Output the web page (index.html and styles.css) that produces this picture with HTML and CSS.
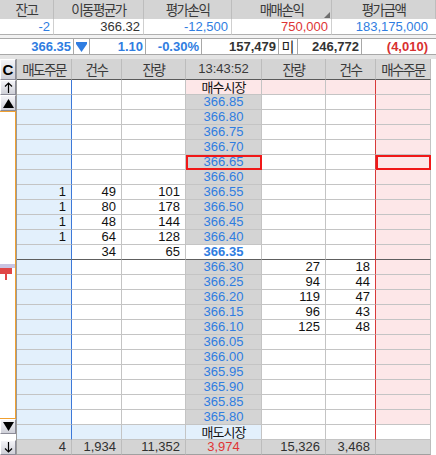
FILE: index.html
```html
<!DOCTYPE html>
<html lang="ko">
<head>
<meta charset="utf-8">
<title>호가</title>
<link rel="stylesheet" href="styles.css">
</head>
<body>
<div class="summary">
  <div class="sh">잔고</div>
  <div class="sh">이동평균가</div>
  <div class="sh">평가손익</div>
  <div class="sh">매매손익<span class="tri"></span></div>
  <div class="sh">평가금액</div>
  <div class="sv blue">-2</div>
  <div class="sv">366.32</div>
  <div class="sv blue">-12,500</div>
  <div class="sv red">750,000</div>
  <div class="sv blue last">183,175,000</div>
</div>
<div class="gap1"></div>
<div class="quote">
  <div class="q blue">366.35</div>
  <div class="q arrow"><svg width="11" height="10" viewBox="0 0 11 10"><polygon points="0,0 11,0 11,2 5.5,10 0,2" fill="#2f7de1"/></svg></div>
  <div class="q blue">1.10</div>
  <div class="q blue">-0.30%</div>
  <div class="q">157,479</div>
  <div class="q mi">미</div>
  <div class="q">246,772</div>
  <div class="q red">(4,010)</div>
</div>
<div class="gap2"></div>
<div class="book">
  <div class="scroll">
    <div class="btn btn-c">C</div>
    <div class="btn"><svg width="9" height="11" viewBox="0 0 9 11"><path d="M4.5 1 V11 M1 4.5 L4.5 1 L8 4.5" stroke="#000" stroke-width="1.2" fill="none"/></svg></div>
    <div class="btn btn-up"><svg width="11" height="9" viewBox="0 0 11 9"><polygon points="5.5,0 11,9 0,9" fill="#000"/></svg></div>
    <div class="track">
      <div class="marker"><span class="m-band"></span><span class="m-flag"></span><span class="m-stem"></span></div>
    </div>
    <div class="btn"><svg width="11" height="9" viewBox="0 0 11 9"><polygon points="0,0 11,0 5.5,9" fill="#000"/></svg></div>
    <div class="sgap"></div>
    <div class="btn"><svg width="9" height="11" viewBox="0 0 9 11"><path d="M4.5 0 V10 M1 6.5 L4.5 10 L8 6.5" stroke="#000" stroke-width="1.2" fill="none"/></svg></div>
  </div>
  <div class="grid">
    <div class="h">매도주문</div><div class="h">건수</div><div class="h">잔량</div><div class="h time">13:43:52</div><div class="h">잔량</div><div class="h">건수</div><div class="h">매수주문</div>

    <div class="g bL"></div><div class="g"></div><div class="g"></div><div class="g p mk pk">매수시장</div><div class="g pk"></div><div class="g pk rL"></div><div class="g pk"></div>

    <div class="g lb bL"></div><div class="g"></div><div class="g"></div><div class="g p">366.85</div><div class="g"></div><div class="g rL"></div><div class="g pk"></div>
    <div class="g lb bL"></div><div class="g"></div><div class="g"></div><div class="g p">366.80</div><div class="g"></div><div class="g rL"></div><div class="g pk"></div>
    <div class="g lb bL"></div><div class="g"></div><div class="g"></div><div class="g p">366.75</div><div class="g"></div><div class="g rL"></div><div class="g pk"></div>
    <div class="g lb bL"></div><div class="g"></div><div class="g"></div><div class="g p">366.70</div><div class="g"></div><div class="g rL"></div><div class="g pk"></div>
    <div class="g lb bL"></div><div class="g"></div><div class="g"></div><div class="g p box">366.65</div><div class="g"></div><div class="g rL"></div><div class="g pk box"></div>
    <div class="g lb bL"></div><div class="g"></div><div class="g"></div><div class="g p">366.60</div><div class="g"></div><div class="g rL"></div><div class="g pk"></div>
    <div class="g lb bL">1</div><div class="g">49</div><div class="g">101</div><div class="g p">366.55</div><div class="g"></div><div class="g rL"></div><div class="g pk"></div>
    <div class="g lb bL">1</div><div class="g">80</div><div class="g">178</div><div class="g p">366.50</div><div class="g"></div><div class="g rL"></div><div class="g pk"></div>
    <div class="g lb bL">1</div><div class="g">48</div><div class="g">144</div><div class="g p">366.45</div><div class="g"></div><div class="g rL"></div><div class="g pk"></div>
    <div class="g lb bL">1</div><div class="g">64</div><div class="g">128</div><div class="g p">366.40</div><div class="g"></div><div class="g rL"></div><div class="g pk"></div>

    <div class="g lb bL cur"></div><div class="g cur">34</div><div class="g cur">65</div><div class="g p now cur">366.35</div><div class="g cur"></div><div class="g rL cur"></div><div class="g pk cur"></div>

    <div class="g lb bL"></div><div class="g"></div><div class="g"></div><div class="g p">366.30</div><div class="g">27</div><div class="g rL">18</div><div class="g pk"></div>
    <div class="g lb bL"></div><div class="g"></div><div class="g"></div><div class="g p">366.25</div><div class="g">94</div><div class="g rL">44</div><div class="g pk"></div>
    <div class="g lb bL"></div><div class="g"></div><div class="g"></div><div class="g p">366.20</div><div class="g">119</div><div class="g rL">47</div><div class="g pk"></div>
    <div class="g lb bL"></div><div class="g"></div><div class="g"></div><div class="g p">366.15</div><div class="g">96</div><div class="g rL">43</div><div class="g pk"></div>
    <div class="g lb bL"></div><div class="g"></div><div class="g"></div><div class="g p">366.10</div><div class="g">125</div><div class="g rL">48</div><div class="g pk"></div>
    <div class="g lb bL"></div><div class="g"></div><div class="g"></div><div class="g p">366.05</div><div class="g"></div><div class="g rL"></div><div class="g pk"></div>
    <div class="g lb bL"></div><div class="g"></div><div class="g"></div><div class="g p">366.00</div><div class="g"></div><div class="g rL"></div><div class="g pk"></div>
    <div class="g lb bL"></div><div class="g"></div><div class="g"></div><div class="g p">365.95</div><div class="g"></div><div class="g rL"></div><div class="g pk"></div>
    <div class="g lb bL"></div><div class="g"></div><div class="g"></div><div class="g p">365.90</div><div class="g"></div><div class="g rL"></div><div class="g pk"></div>
    <div class="g lb bL"></div><div class="g"></div><div class="g"></div><div class="g p">365.85</div><div class="g"></div><div class="g rL"></div><div class="g pk"></div>
    <div class="g lb bL"></div><div class="g"></div><div class="g"></div><div class="g p">365.80</div><div class="g"></div><div class="g rL"></div><div class="g pk"></div>

    <div class="g lb bL"></div><div class="g lb"></div><div class="g lb"></div><div class="g p mk lb">매도시장</div><div class="g"></div><div class="g rL"></div><div class="g"></div>

    <div class="g t">4</div><div class="g t">1,934</div><div class="g t">11,352</div><div class="g t tp">3,974</div><div class="g t">15,326</div><div class="g t">3,468</div><div class="g t"></div>
  </div>
  <div class="rmargin"></div>
</div>
</body>
</html>
```

FILE: styles.css
```css
* { box-sizing: border-box; margin: 0; padding: 0; }
html, body { width: 436px; height: 455px; overflow: hidden; background: #fff; }
body {
  font-family: "Liberation Sans Narrow", "Liberation Sans", "Noto Sans CJK KR", sans-serif;
  font-size: 13px;
  color: #111;
}

.blue { color: #2f7de1; }
.red { color: #dd3535; }

/* summary panel */
.summary {
  display: grid;
  grid-template-columns: 54px 90px 88px 100px 104px;
  grid-template-rows: 19px 16px;
}
.sh {
  position: relative;
  background: #d4d4d4;
  color: #3a3a3a;
  font-family: "Noto Sans CJK KR", sans-serif;
  font-size: 13.5px;
  letter-spacing: -1.5px;
  text-align: center;
  line-height: 19px;
  border-right: 1px solid #bdbdbd;
}
.sh:last-child { border-right: none; }
.tri {
  position: absolute;
  right: 1px;
  bottom: 1px;
  width: 0;
  height: 0;
  border-left: 6px solid transparent;
  border-bottom: 6px solid #6e6e6e;
}
.sv {
  background: #fff;
  text-align: right;
  padding-right: 3px;
  line-height: 15px;
  border-right: 1px solid #cfcfcf;
  border-bottom: 1px solid #b0b0b0;
  color: #333;
}
.sv.blue { color: #2f7de1; }
.sv.red { color: #dd3535; }
.sv.last { padding-right: 8px; border-right: none; }

.gap1 { height: 3px; background: #f2f2f2; }

/* quote strip */
.quote {
  display: grid;
  grid-template-columns: 74px 16px 56px 56px 77px 19px 64px 74px;
  height: 17px;
  border-top: 1px solid #a8a8a8;
  border-bottom: 1px solid #a8a8a8;
  background: #fff;
}
.q {
  border-right: 1px solid #a8a8a8;
  text-align: right;
  padding-right: 2px;
  font-family: "Liberation Sans", sans-serif;
  font-weight: bold;
  font-size: 13px;
  line-height: 15px;
  color: #333;
  white-space: nowrap;
}
.q:last-child { border-right: none; padding-right: 8px; }
.q.blue { color: #2f7de1; }
.q.red { color: #d83030; }
.q.arrow {
  display: flex;
  align-items: center;
  justify-content: center;
  padding: 0;
}
.q.mi {
  text-align: center;
  padding: 0;
  font-family: "Noto Sans CJK KR", sans-serif;
  font-weight: normal;
  font-size: 14px;
  color: #222;
}

.gap2 { height: 4px; background: #e4e4e4; }

/* order book */
.book {
  display: flex;
  height: 396px;
}
.scroll {
  width: 16px;
  display: flex;
  flex-direction: column;
}
.btn {
  width: 16px;
  height: 15px;
  flex: none;
  background: linear-gradient(#f4f4f8, #cfd0d8);
  border: 1px solid;
  border-color: #ffffff #8c8c98 #8c8c98 #ffffff;
  display: flex;
  align-items: center;
  justify-content: center;
  color: #000;
}
.btn-c {
  height: 21px;
  font-weight: bold;
  font-size: 15px;
  font-family: "Liberation Sans", sans-serif;
}
.btn-up { height: 16px; }
.sgap { height: 6px; flex: none; background: #fff; }
.track {
  flex: 1;
  position: relative;
  background: #fff;
  border-top: 1px solid #f0a030;
  border-right: 1px solid #f0a030;
  border-bottom: 1px solid #f0a030;
}
.marker {
  position: absolute;
  top: 152px;
  left: 0;
  width: 15px;
  height: 16px;
}
.m-band {
  position: absolute;
  left: 0; top: 0;
  width: 15px; height: 4px;
  background: #c9c4e2;
}
.m-flag {
  position: absolute;
  left: 0; top: 4px;
  width: 12px; height: 6px;
  background: #e04646;
}
.m-stem {
  position: absolute;
  left: 5px; top: 10px;
  width: 2px; height: 6px;
  background: #e04646;
}

.grid {
  width: 415px;
  display: grid;
  grid-template-columns: 55px 50px 64px 76px 64px 50px 55px;
  grid-template-rows: 21px repeat(25, 15px);
  border-left: 1px solid #9a9a9a;
}
.rmargin { flex: 1; background: #fff; }

.h {
  background: #d4d4d4;
  color: #3a3a3a;
  font-family: "Noto Sans CJK KR", sans-serif;
  font-size: 13.5px;
  letter-spacing: -1.5px;
  text-align: center;
  line-height: 20px;
  border-right: 1px solid #bcbcbc;
  border-bottom: 1px solid #5a5a5a;
  white-space: nowrap;
}
.h.time {
  letter-spacing: 0;
  font-family: "Liberation Sans Narrow", "Liberation Sans", sans-serif;
  font-size: 13px;
}

.g {
  background: #fff;
  border-right: 1px solid #c4c4c4;
  border-bottom: 1px solid #c4c4c4;
  line-height: 14px;
  text-align: right;
  padding-right: 5px;
  white-space: nowrap;
  overflow: hidden;
  color: #111;
}
.g.lb { background: #e3f0fc; }
.g.pk { background: #fde7e8; }
.g.bL { border-right-color: #3c78d8; }
.g.rL { border-right-color: #d83a3a; }
.g.cur { border-bottom-color: #5e5e5e; }

.g.p {
  text-align: center;
  padding: 0;
  color: #2f7de1;
  background: #d4d4d4;
}
.g.p.now {
  background: #fff;
  font-family: "Liberation Sans", sans-serif;
  font-weight: bold;
  font-size: 13px;
}
.g.p.mk {
  overflow: visible;
  color: #111;
  font-family: "Noto Sans CJK KR", sans-serif;
  font-size: 13px;
  letter-spacing: -1px;
  line-height: 14px;
}
.g.p.mk.pk { background: #fde7e8; }
.g.p.mk.lb { background: #e3f0fc; }

.g.box {
  overflow: visible;
  outline: 2px solid #f01818;
  outline-offset: -2px;
}

.g.t {
  background: #d4d4d4;
  border-right-color: #bcbcbc;
  border-bottom-color: #a0a0a0;
  color: #303030;
}
.g.tp { text-align: center; padding: 0; color: #e03535; }
```
